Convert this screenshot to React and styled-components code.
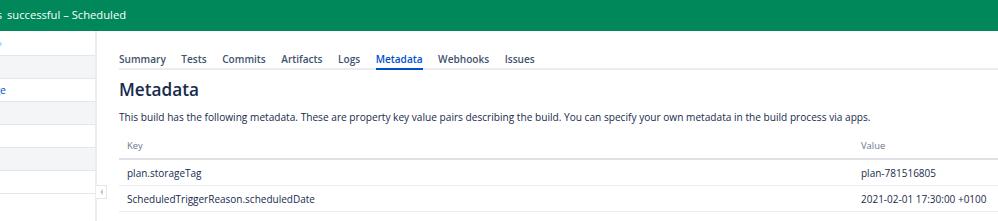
import React from 'react';
import styled, { createGlobalStyle } from 'styled-components';

const GlobalStyle = createGlobalStyle`
  html, body {
    margin: 0;
    padding: 0;
    background: #fff;
    font-family: "Open Sans", "Noto Sans", sans-serif;
    color: #172b4d;
  }
`;

const Page = styled.div`
  display: grid;
  grid-template-rows: 31px 1fr;
  height: 221px;
  overflow: hidden;
`;

const Header = styled.header`
  display: flex;
  align-items: center;
  gap: 5px;
  background: #00875a;
  color: #fff;
  font-size: 11.2px;
  white-space: nowrap;
  padding-bottom: 3px;
  box-sizing: border-box;
`;

// shows only the right-hand end of a label that runs off the left edge
const Tail = styled.span`
  display: inline-flex;
  justify-content: flex-end;
  overflow: hidden;
  width: ${p => p.$w}px;
  white-space: nowrap;
  color: ${p => p.$color || 'inherit'};
`;

const Body = styled.div`
  position: relative;
  display: flex;
  min-height: 0;
`;

const Sidebar = styled.nav`
  flex: 0 0 95px;
  border-right: 2px solid #ebecf0;
  display: flex;
  flex-direction: column;
`;

const NavRow = styled.div`
  display: flex;
  align-items: center;
  height: ${p => p.$h || 22}px;
  border-bottom: 1px solid #e4e6ea;
  background: ${p => (p.$shaded ? '#f4f5f7' : '#fff')};
  font-size: 10.5px;
`;

const Collapse = styled.button`
  position: absolute;
  left: 96px;
  top: 154px;
  width: 11px;
  height: 14px;
  padding: 0;
  border: 1px solid #e4e6ea;
  border-left: none;
  background: #fff;
  display: flex;
  align-items: center;
  justify-content: center;
  &::before {
    content: '';
    border-style: solid;
    border-width: 3px 3px 3px 0;
    border-color: transparent #c1c7d0 transparent transparent;
  }
`;

const Main = styled.main`
  flex: 1;
  min-width: 0;
  padding-left: 22px;
  overflow: hidden;
`;

const TabBar = styled.div`
  display: flex;
  gap: 15.5px;
  padding-top: 20px;
  border-bottom: 2px solid #ebecf0;
`;

const Tab = styled.a`
  font-size: 10.1px;
  font-weight: 600;
  line-height: 16px;
  color: ${p => (p.$active ? '#0052cc' : '#42526e')};
  padding-bottom: 1px;
  border-bottom: 2px solid ${p => (p.$active ? '#0052cc' : 'transparent')};
  margin-bottom: -2px;
  white-space: nowrap;
`;

const Title = styled.h1`
  margin: 8px 0 0;
  font-size: 17.2px;
  font-weight: 600;
  line-height: 24px;
  color: #172b4d;
`;

const Lead = styled.p`
  margin: 8px 0 0;
  font-size: 10.15px;
  line-height: 14px;
  white-space: nowrap;
  color: #172b4d;
`;

const Table = styled.div`
  display: grid;
  grid-template-columns: 734px 1fr;
  margin-top: 8px;
  width: 900px;
`;

const HeadCell = styled.div`
  padding: 0 8px;
  height: 26px;
  display: flex;
  align-items: center;
  font-size: 9.4px;
  color: #6b778c;
  border-bottom: 2px solid #dfe1e6;
`;

const Cell = styled.div`
  padding: 0 8px;
  height: 25px;
  display: flex;
  align-items: center;
  font-size: 10px;
  color: #172b4d;
  border-bottom: 1px solid #ebecf0;
  white-space: nowrap;
`;

const tabs = ['Summary', 'Tests', 'Commits', 'Artifacts', 'Logs', 'Metadata', 'Webhooks', 'Issues'];

const rows = [
  ['plan.storageTag', 'plan-781516805'],
  ['ScheduledTriggerReason.scheduledDate', '2021-02-01 17:30:00 +0100'],
];

export default function App() {
  return (
    <>
      <GlobalStyle />
      <Page>
        <Header>
          <Tail $w={2}>was</Tail>
          <span>successful – Scheduled</span>
        </Header>
        <Body>
          <Sidebar>
            <NavRow $h={24}>
              <Tail $w={2} $color="#79b8ff">»</Tail>
            </NavRow>
            <NavRow $shaded />
            <NavRow>
              <Tail $w={6} $color="#0052cc">Stage</Tail>
            </NavRow>
            <NavRow $shaded />
            <NavRow />
            <NavRow $shaded />
            <NavRow />
          </Sidebar>
          <Collapse aria-label="Collapse sidebar" />
          <Main>
            <TabBar>
              {tabs.map(t => (
                <Tab key={t} $active={t === 'Metadata'}>{t}</Tab>
              ))}
            </TabBar>
            <Title>Metadata</Title>
            <Lead>
              This build has the following metadata. These are property key value pairs describing the build. You can specify your own metadata in the build process via apps.
            </Lead>
            <Table>
              <HeadCell>Key</HeadCell>
              <HeadCell>Value</HeadCell>
              {rows.map(([k, v]) => (
                <React.Fragment key={k}>
                  <Cell>{k}</Cell>
                  <Cell>{v}</Cell>
                </React.Fragment>
              ))}
            </Table>
          </Main>
        </Body>
      </Page>
    </>
  );
}
